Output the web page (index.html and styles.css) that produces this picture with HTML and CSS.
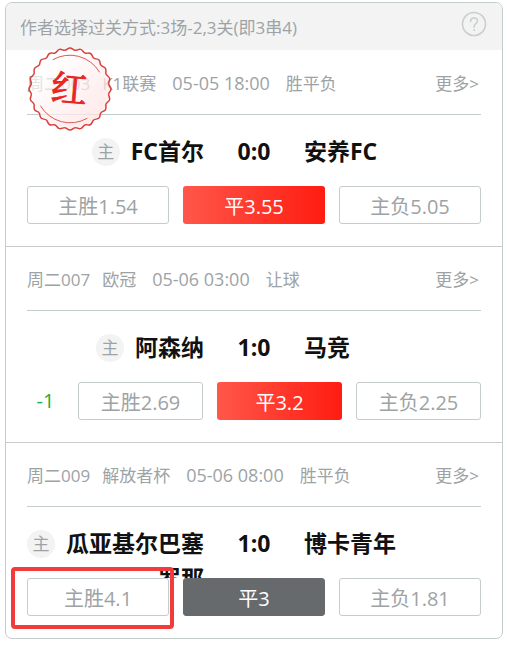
FILE: index.html
```html
<!DOCTYPE html>
<html lang="zh-CN">
<head>
    <meta charset="UTF-8">
    <meta name="viewport" content="width=device-width, initial-scale=1.0">
    <title>过关方案</title>
    <link rel="stylesheet" href="styles.css">
</head>
<body>
    <main class="card">
        <header class="card-header">
            <h1>作者选择过关方式:3场-2,3关(即3串4)</h1>
            <button type="button" class="help" aria-label="帮助">
                <svg width="26" height="26" viewBox="0 0 26 26" fill="none" stroke="#c9cecf" stroke-width="1.6">
                    <circle cx="13" cy="13" r="11.5"/>
                    <path d="M9.6 10.4C9.6 8.2 11 7 13 7s3.5 1.3 3.5 3.1c0 2.5-3.4 2.7-3.4 5.5v.6" stroke-linecap="round"/>
                    <circle cx="13.1" cy="19" r="1" fill="#c9cecf" stroke="none"/>
                </svg>
            </button>
        </header>

        <div class="matches">
            <section class="match">
                <div class="info">
                    <span class="number">周二003</span>
                    <span>K1联赛</span>
                    <span class="date">05-05 18:00</span>
                    <span>胜平负</span>
                    <a href="#" class="more">更多&gt;</a>
                </div>
                <div class="teams">
                    <div class="home"><span class="tag">主</span><span>FC首尔</span></div>
                    <div class="score">0:0</div>
                    <div class="away">安养FC</div>
                </div>
                <div class="options">
                    <button type="button" class="option">主胜1.54</button>
                    <button type="button" class="option hit">平3.55</button>
                    <button type="button" class="option">主负5.05</button>
                </div>

                <!-- winning stamp -->
                <svg class="seal" width="84" height="84" viewBox="-42 -42 84 84">
                    <defs>
                        <linearGradient id="sealFill" x1="0" y1="0" x2="1" y2="1">
                            <stop offset="0.2" stop-color="#ffffff"/>
                            <stop offset="1" stop-color="#ffdcdc"/>
                        </linearGradient>
                        <path id="lobe" d="M-5.09-38.67C-3.1-38.93-2.2-41 0-41S3.1-38.93 5.09-38.67"/>
                        <g id="lobes">
                            <use href="#lobe"/>
                            <use href="#lobe" transform="rotate(15)"/>
                            <use href="#lobe" transform="rotate(30)"/>
                            <use href="#lobe" transform="rotate(45)"/>
                            <use href="#lobe" transform="rotate(60)"/>
                            <use href="#lobe" transform="rotate(75)"/>
                        </g>
                    </defs>
                    <circle r="39.5" fill="url(#sealFill)" opacity="0.72"/>
                    <g fill="none" stroke="#d8403c" stroke-width="1.5">
                        <use href="#lobes"/>
                        <use href="#lobes" transform="rotate(90)"/>
                        <use href="#lobes" transform="rotate(180)"/>
                        <use href="#lobes" transform="rotate(270)"/>
                    </g>
                    <g fill="none" stroke="#dc5a56" stroke-width="1" stroke-linecap="round">
                        <path d="M-17-29.4A34 34 0 0 1 29.4-17"/>
                        <path d="M-29.4 17A34 34 0 0 0 17 29.4"/>
                    </g>
                    <text class="seal-text" x="-1" y="13" text-anchor="middle" transform="rotate(5)">红</text>
                </svg>
            </section>

            <section class="match">
                <div class="info">
                    <span class="number">周二007</span>
                    <span>欧冠</span>
                    <span class="date">05-06 03:00</span>
                    <span>让球</span>
                    <a href="#" class="more">更多&gt;</a>
                </div>
                <div class="teams">
                    <div class="home"><span class="tag">主</span><span>阿森纳</span></div>
                    <div class="score">1:0</div>
                    <div class="away">马竞</div>
                </div>
                <div class="options">
                    <span class="handicap">-1</span>
                    <button type="button" class="option">主胜2.69</button>
                    <button type="button" class="option hit">平3.2</button>
                    <button type="button" class="option">主负2.25</button>
                </div>
            </section>

            <section class="match">
                <div class="info">
                    <span class="number">周二009</span>
                    <span>解放者杯</span>
                    <span class="date">05-06 08:00</span>
                    <span>胜平负</span>
                    <a href="#" class="more">更多&gt;</a>
                </div>
                <div class="teams">
                    <div class="home"><span class="tag">主</span><span>瓜亚基尔巴塞罗那</span></div>
                    <div class="score">1:0</div>
                    <div class="away">博卡青年</div>
                </div>
                <div class="options">
                    <div class="marked">
                        <button type="button" class="option">主胜4.1</button>
                    </div>
                    <button type="button" class="option picked">平3</button>
                    <button type="button" class="option">主负1.81</button>
                </div>
            </section>
        </div>
    </main>
</body>
</html>
```
FILE: styles.css
```css
* {
    box-sizing: border-box;
}

body {
    margin: 0;
    padding: 2px 4px 6px 5px;
    background-color: #fff;
    color: #9da3a5;
    font-family: "Open Sans", "Noto Sans CJK SC", sans-serif;
    font-size: 17px;
}

button {
    font-family: inherit;
    cursor: pointer;
}

.card {
    border: 1px solid #c5cccd;
    border-radius: 7px;
}

.card-header {
    display: flex;
    justify-content: space-between;
    align-items: center;
    height: 47px;
    padding: 0 15px 0 14px;
    background-color: #f3f3f3;
    border-radius: 6px 6px 0 0;
}

.card-header h1 {
    margin: 0;
    font-size: 17px;
    font-weight: normal;
}

.help {
    padding: 0 0 5px;
    border: none;
    background: none;
}

.help svg {
    display: block;
}

.matches {
    padding-top: 1px;
}

.match {
    position: relative;
    padding: 0 21px 22px;
    border-bottom: 1px solid #c8cccd;
}

.match:last-child {
    border-bottom: none;
}

.info {
    display: flex;
    align-items: center;
    gap: 16px;
    height: 64px;
    border-bottom: 1px solid #c5cccd;
    white-space: nowrap;
}

.number {
    margin-right: -4px;
}

.date {
    font-size: 18px;
}

.more {
    margin-left: auto;
    padding-right: 2px;
    color: inherit;
    text-decoration: none;
}

.teams {
    display: grid;
    grid-template-columns: 1fr 100px 1fr;
    height: 71px;
    padding-top: 19px;
    overflow: hidden;
    color: #111;
    font-size: 23px;
    font-weight: bold;
    line-height: 35px;
}

.home {
    display: flex;
    justify-content: flex-end;
    align-items: flex-start;
    gap: 11px;
    text-align: right;
}

.tag {
    flex-shrink: 0;
    width: 28px;
    height: 28px;
    margin-top: 4px;
    border-radius: 50%;
    background-color: #f3f3f3;
    color: #9da3a5;
    font-size: 17px;
    font-weight: normal;
    line-height: 28px;
    text-align: center;
}

.score {
    text-align: center;
}

.options {
    display: flex;
    gap: 14px;
}

.option {
    flex: 1;
    height: 38px;
    padding: 0;
    border: 1px solid #c5cccd;
    border-radius: 3px;
    background-color: #fff;
    color: #9da3a5;
    font-size: 20px;
}

.hit {
    border-color: transparent;
    background: linear-gradient(to right, #ff574b, #ff1c10) border-box;
    color: #fff;
}

.picked {
    border-color: #666a6d;
    background-color: #666a6d;
    color: #fff;
}

.handicap {
    width: 37px;
    color: #22ac38;
    font-size: 20px;
    line-height: 38px;
    text-align: center;
}

/* same basis as the bordered buttons beside it */
.marked {
    position: relative;
    display: flex;
    flex: 1 1 2px;
}

.marked::after {
    content: "";
    position: absolute;
    top: -11px;
    right: -5px;
    bottom: -13px;
    left: -16px;
    border: 4px solid #f23c3c;
    border-radius: 4px;
    pointer-events: none;
}

.seal {
    position: absolute;
    top: -4px;
    left: 22px;
}

.seal-text {
    fill: #e62722;
    stroke: #e62722;
    stroke-width: 1;
    font-family: "Noto Serif CJK SC", "Noto Sans CJK SC", serif;
    font-size: 36px;
}
```
